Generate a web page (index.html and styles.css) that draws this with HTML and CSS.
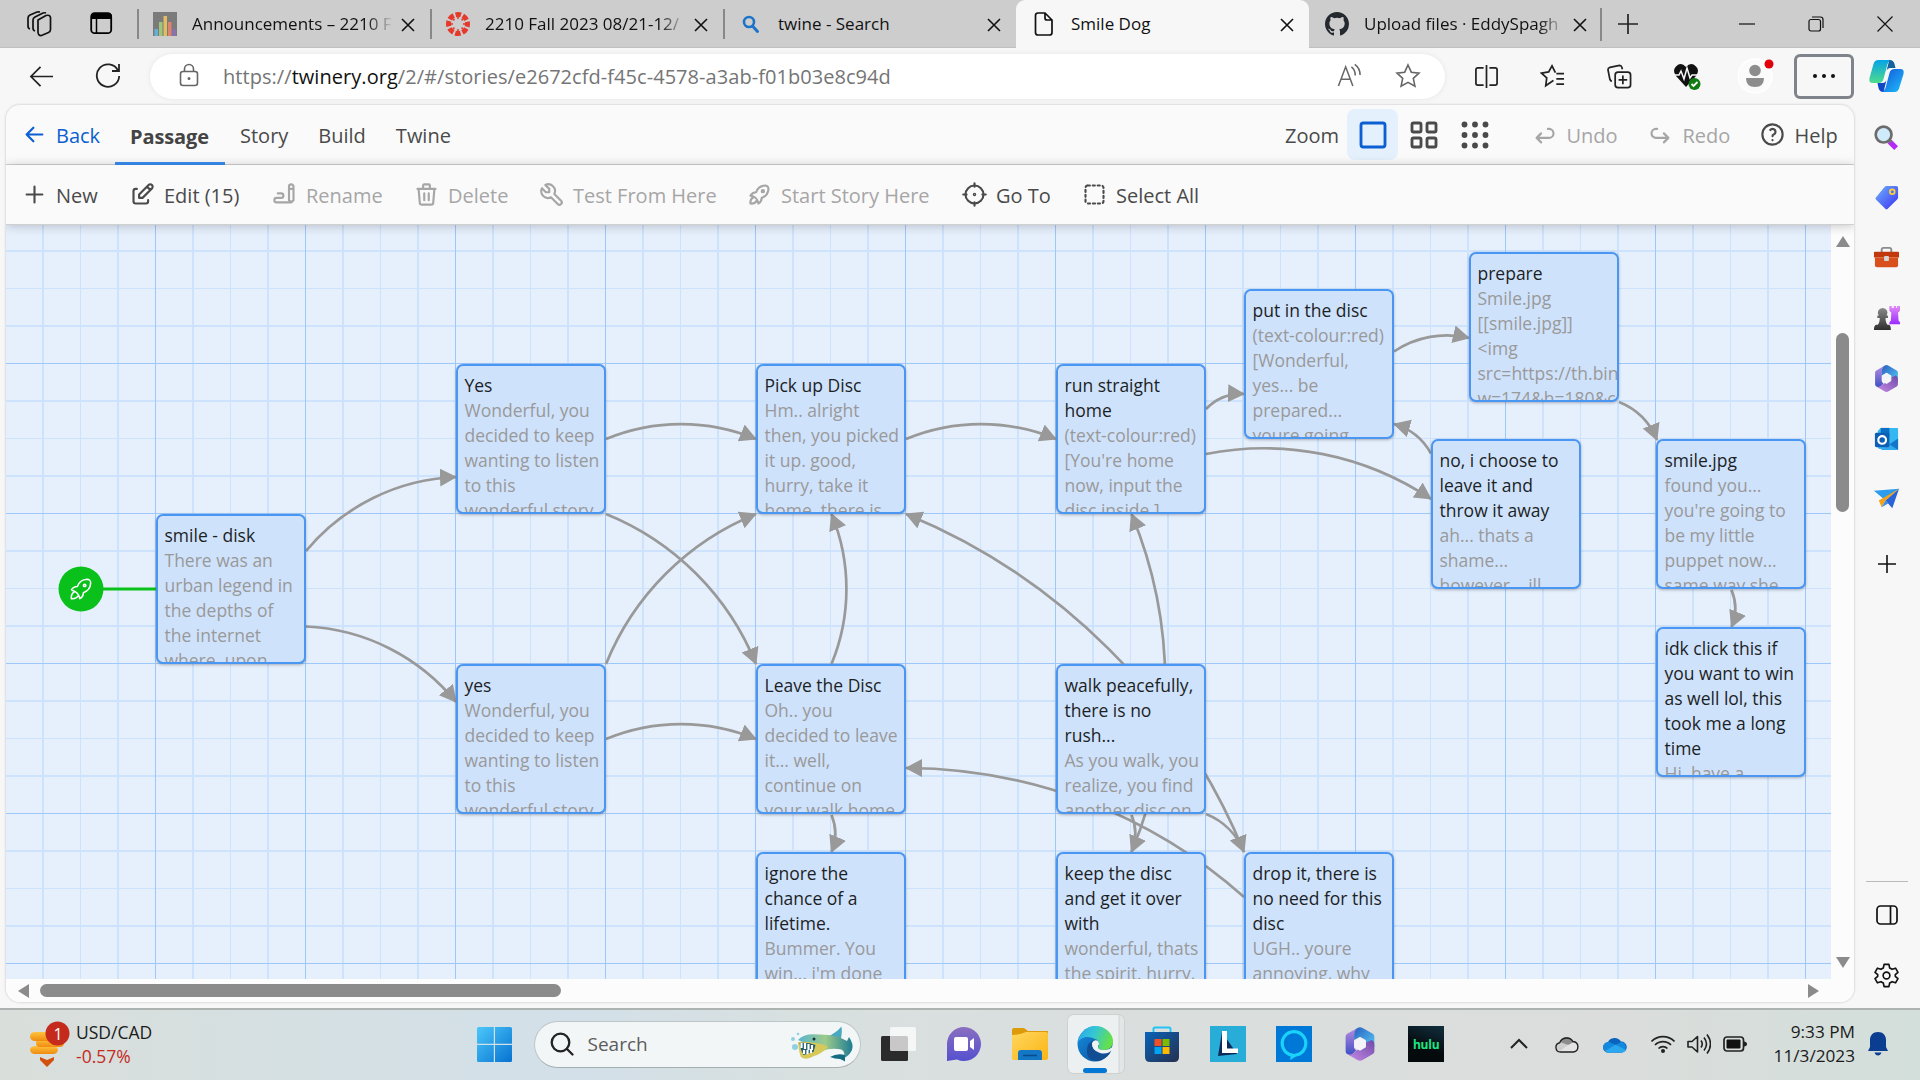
FILE: index.html
```html
<!DOCTYPE html>
<html lang="en">
<head>
<meta charset="utf-8">
<title>Smile Dog</title>
<link rel="stylesheet" href="styles.css">
</head>
<body>
<svg class="defs" width="0" height="0">
  <defs>
    <linearGradient id="gBlue" x1="0" y1="0" x2="1" y2="1"><stop offset="0" stop-color="#4cc8fb"/><stop offset="1" stop-color="#0672d0"/></linearGradient>
    <linearGradient id="gTag" x1="0" y1="0" x2="1" y2="1"><stop offset="0" stop-color="#6fb4ff"/><stop offset="1" stop-color="#3a2ff0"/></linearGradient>
    <linearGradient id="gPurple" x1="0" y1="0" x2="0" y2="1"><stop offset="0" stop-color="#e08af5"/><stop offset="1" stop-color="#9a2bff"/></linearGradient>
    <linearGradient id="gPawn" x1="0" y1="0" x2="0" y2="1"><stop offset="0" stop-color="#8a8a8a"/><stop offset="1" stop-color="#2e2e2e"/></linearGradient>
    <linearGradient id="gChat" x1="0" y1="0" x2="0" y2="1"><stop offset="0" stop-color="#8a6fc0"/><stop offset="1" stop-color="#5550cf"/></linearGradient>
    <linearGradient id="gFolder" x1="0" y1="0" x2="1" y2="1"><stop offset="0" stop-color="#ffd75e"/><stop offset="1" stop-color="#fbb414"/></linearGradient>
    <linearGradient id="gStore" x1="0" y1="0" x2="1" y2="1"><stop offset="0" stop-color="#0a63b8"/><stop offset="1" stop-color="#25304f"/></linearGradient>
    <linearGradient id="gEdgeTop" x1="0" y1="0" x2="1" y2="0.3"><stop offset="0" stop-color="#2aa5ea"/><stop offset=".5" stop-color="#35c6d6"/><stop offset="1" stop-color="#63e04c"/></linearGradient>
    <linearGradient id="gEdgeLow" x1="0" y1="0" x2="1" y2="1"><stop offset="0" stop-color="#1590e0"/><stop offset="1" stop-color="#0b4a96"/></linearGradient>
    <linearGradient id="gCopA" x1="0" y1="0" x2="0" y2="1"><stop offset="0" stop-color="#06a3e6"/><stop offset="1" stop-color="#4fdc8c"/></linearGradient>
    <linearGradient id="gCopB" x1="0" y1="0" x2="1" y2="1"><stop offset="0" stop-color="#1551d8"/><stop offset="1" stop-color="#1cc0fb"/></linearGradient>
    <linearGradient id="gShark" x1="0" y1="0" x2="1" y2="0"><stop offset="0" stop-color="#58b4d0"/><stop offset=".5" stop-color="#9ccb8a"/><stop offset="1" stop-color="#1f7c93"/></linearGradient>
    <linearGradient id="gCoin" x1="0" y1="0" x2="0" y2="1"><stop offset="0" stop-color="#fdc33c"/><stop offset="1" stop-color="#f08a10"/></linearGradient>
    <linearGradient id="gHexA" x1="0" y1="0" x2="0" y2="1"><stop offset="0" stop-color="#b98be0"/><stop offset="1" stop-color="#3a4fc4"/></linearGradient>
    <linearGradient id="gHexB" x1="0" y1="0" x2="1" y2="1"><stop offset="0" stop-color="#2a5fc0"/><stop offset="1" stop-color="#56c8f4"/></linearGradient>
    <linearGradient id="gHexC" x1="0" y1="1" x2="1" y2="0"><stop offset="0" stop-color="#c78be6"/><stop offset="1" stop-color="#6f4aa8"/></linearGradient>
    <symbol id="x" viewBox="0 0 14 14"><path d="M1 1L13 13M13 1L1 13"/></symbol>
    <symbol id="m365" viewBox="0 0 24 26">
      <path d="M10 .7L2.200 5.200Q1 6 1 7.500v11q0 1.500 1.200 2.200L5 22l4-4-1.500-2V7.500Q7.500 3 10 .7z" fill="url(#gHexA)"/>
      <path d="M10 .7q2-1.200 4 0l7.800 4.500Q23 6 23 7.500v8L16.500 12V10L12 7.500 7.500 10V6.500Q7.500 2.500 10 .7z" fill="url(#gHexB)"/>
      <path d="M2.200 20.700Q6 22 9 18l7.500-3V12L21 10q2 .8 2 4v4.500q0 1.500-1.200 2.200L14 25.300q-2 1.200-4 0z" fill="url(#gHexC)"/>
      <path d="M12 7.800l4.500 2.700v5L12 18.200l-4.500-2.700v-5z" fill="#f4f4f8"/>
    </symbol>
    <symbol id="rocket" viewBox="0 0 24 24"><path d="M4 13a8 8 0 0 1 7 7a6 6 0 0 0 3 -5a9 9 0 0 0 6 -8a3 3 0 0 0 -3 -3a9 9 0 0 0 -8 6a6 6 0 0 0 -5 3M7 14a6 6 0 0 0 -3 6a6 6 0 0 0 6 -3"/><circle cx="15" cy="9" r="1"/></symbol>
    <marker id="arrow" markerUnits="userSpaceOnUse" markerWidth="18" markerHeight="20" refX="16" refY="9" orient="auto"><path d="M0 0L17 9L0 18Z" fill="#999"/></marker>
  </defs>
</svg>

<div class="tabbar">
  <div class="tab-actions">
    <svg width="26" height="26" viewBox="0 0 26 26"><g fill="none" stroke="#111" stroke-width="1.700" stroke-linejoin="round"><path d="M12 9l8-4.500q4-1 4.500 2v12q0 2-2 3l-7 3q-3 .5-3.500-3z"/><path d="M9 20q-2-.5-2-3V9q0-2 2-3l8-4q2-.5 3 0"/><path d="M4 18q-2-.5-2-3V7q0-2 2-3l7-3q2-.3 3 0"/></g></svg>
    <svg width="23" height="23" viewBox="0 0 23 23"><rect x="1.200" y="1.200" width="20" height="20" rx="3.500" fill="none" stroke="#000" stroke-width="1.800"/><path d="M1 7V4.500Q1 1 4.500 1h14Q22 1 22 4.500V7z"/><path d="M6.500 7v14" stroke="#000" stroke-width="1.500"/></svg>
  </div>
  <div class="tab">
    <svg class="fav" viewBox="0 0 24 24"><path fill="#7b7b7b" d="M0 0h24v24H0z"/><path fill="#63b0d8" d="M1.500 17H5v7H1.500z"/><path fill="#9cc77a" d="M6 10h3.500v14H6z"/><path fill="#e2bd62" d="M10.500 4H14v20h-3.500z"/><path fill="#df8371" d="M15 10h3.500v14H15z"/><path fill="#8a72b0" d="M19.500 17H23v7h-3.500z"/></svg>
    <span class="tab-title fade">Announcements – 2210 F</span><svg class="close"><use href="#x"/></svg>
  </div>
  <div class="tab">
    <svg class="fav" viewBox="0 0 24 24"><circle cx="12" cy="12" r="9.500" fill="none" stroke="#e4392b" stroke-width="5" stroke-dasharray="5.460 2" stroke-dashoffset="2.700"/><g fill="#e4392b"><circle cx="12" cy="6" r="1"/><circle cx="12" cy="18" r="1"/><circle cx="6" cy="12" r="1"/><circle cx="18" cy="12" r="1"/><circle cx="7.800" cy="7.800" r="1"/><circle cx="16.200" cy="7.800" r="1"/><circle cx="7.800" cy="16.200" r="1"/><circle cx="16.200" cy="16.200" r="1"/></g></svg>
    <span class="tab-title fade">2210 Fall 2023 08/21-12/</span><svg class="close"><use href="#x"/></svg>
  </div>
  <div class="tab">
    <svg class="fav" viewBox="0 0 24 24"><circle cx="10" cy="10" r="5" fill="none" stroke="#1b74c9" stroke-width="2.600"/><path d="M13.500 14L18.500 19.500" stroke="#1b74c9" stroke-width="3" stroke-linecap="round"/></svg>
    <span class="tab-title">twine - Search</span><svg class="close"><use href="#x"/></svg>
  </div>
  <div class="tab active">
    <svg class="fav" viewBox="0 0 24 24"><path d="M3.500 3.500q0-2.500 2.500-2.500h7l7 7v12.500q0 2.500-2.500 2.500H6q-2.500 0-2.500-2.500zM13 1v5q0 2 2 2h5" fill="none" stroke="#111" stroke-width="1.700"/></svg>
    <span class="tab-title">Smile Dog</span><svg class="close"><use href="#x"/></svg>
  </div>
  <div class="tab">
    <svg class="fav" viewBox="0 0 16 16"><path fill="#24292f" d="M8 0C3.580 0 0 3.580 0 8c0 3.540 2.290 6.530 5.470 7.590.4.070.55-.17.55-.38 0-.19-.01-.82-.01-1.490-2.010.37-2.530-.49-2.690-.94-.09-.23-.48-.94-.82-1.130-.28-.15-.68-.52-.01-.53.63-.01 1.080.58 1.230.82.72 1.210 1.870.87 2.330.66.070-.52.28-.87.51-1.070-1.780-.2-3.640-.89-3.640-3.950 0-.87.31-1.590.82-2.150-.08-.2-.36-1.020.08-2.120 0 0 .67-.21 2.200.82a7.600 7.600 0 0 1 4 0c1.530-1.040 2.200-.82 2.200-.82.44 1.100.16 1.920.08 2.120.51.56.82 1.270.82 2.150 0 3.070-1.870 3.750-3.650 3.950.29.25.54.73.54 1.480 0 1.070-.01 1.930-.01 2.200 0 .21.15.46.55.38A8 8 0 0 0 16 8c0-4.420-3.580-8-8-8z"/></svg>
    <span class="tab-title fade">Upload files · EddySpagh</span><svg class="close"><use href="#x"/></svg>
  </div>
  <svg class="newtab" viewBox="0 0 22 22"><path d="M11 1v20M1 11h20"/></svg>
  <div class="window-controls">
    <svg viewBox="0 0 16 16"><path d="M0 8h16"/></svg>
    <svg viewBox="0 0 16 16"><rect x="1" y="3.500" width="11.500" height="11.500" rx="2"/><path d="M4 1h8.500q2.500 0 2.500 2.500V12"/></svg>
    <svg viewBox="0 0 16 16"><path d="M.5.5l15 15M15.500.5l-15 15"/></svg>
  </div>
</div>

<div class="navbar">
  <svg class="nav-back" viewBox="0 0 26 26"><path d="M25 13H2M12 3L2 13l10 10"/></svg>
  <svg class="nav-reload" viewBox="0 0 26 26"><path d="M23 7.500A11.200 11.200 0 1 0 24.200 13M24 1v7h-7"/></svg>
  <div class="address">
    <svg class="lock" viewBox="0 0 20 24"><rect x="1.500" y="8.500" width="17" height="14" rx="2.500"/><path d="M5.500 8.500V6a4.500 4.500 0 0 1 9 0v2.500"/><circle cx="10" cy="15.500" r=".7"/></svg>
    <span class="url">https://<b>twinery.org</b>/2/#/stories/e2672cfd-f45c-4578-a3ab-f01b03e8c94d</span>
    <svg class="read" viewBox="0 0 26 26"><path d="M1.500 24L9 4l7.500 20M4 17h10M15 4q4 3 4 9M18.500 1.500q5.500 4 5.500 11"/></svg>
    <svg class="star" viewBox="0 0 26 26"><path d="M13 2l3.300 7.200 7.700.9-5.700 5.300 1.600 7.800L13 19.300l-6.900 3.900 1.600-7.800L2 10.100l7.700-.9z"/></svg>
  </div>
  <div class="nav-icons">
    <span><svg viewBox="0 0 26 26"><path d="M10 4H4Q2 4 2 6v14q0 2 2 2h6M16 4h6q2 0 2 2v14q0 2-2 2h-6M13 1v24"/></svg></span>
    <span><svg viewBox="0 0 26 26"><path d="M12 18.500l-6 4 1-8L1.500 9.500l7.500-1.300L12.500 2 16 9M17 10h8M17 15.500h8M17 21h8M12 18.500l2-1.500"/></svg></span>
    <span><svg viewBox="0 0 26 26"><rect x="8.500" y="8.500" width="16" height="16" rx="3"/><path d="M16.500 12v9M12 16.500h9M5 18q-1.500-.5-2-2L1 6q0-2 2-2.500l10-2q2 0 2.500 2l.5 2"/></svg></span>
    <span><svg class="heart" viewBox="0 0 28 28"><path fill="#111" stroke="none" d="M13 25L3 14Q-1 8 3 4.500 8-.5 13 5q5-5.500 10-.5 4 3.500 0 9.500z"/><path stroke="#f7f7f7" stroke-width="1.500" d="M0 13h6l2-4 3 8 3-11 3 10 2-3h6"/><circle cx="21.500" cy="22" r="6" fill="#0f7b10" stroke="none"/><path d="M18.500 22l2 2 4-4" stroke="#fff"/></svg></span>
    <span><svg class="avatar" viewBox="0 0 36 40"><circle cx="17" cy="20" r="17" fill="#fbfbfb" stroke="#fff" stroke-width="1.500"/><circle cx="17" cy="14.500" r="5.800" fill="#8d8d8d" stroke="none"/><path d="M8 22h18q0 9-9 9t-9-9z" fill="#8d8d8d" stroke="none"/><circle cx="31" cy="8" r="4.500" fill="#e3000b" stroke="none"/></svg></span>
    <span class="more"><i></i><i></i><i></i></span>
    <span><svg class="copilot" viewBox="0 0 36 34"><path fill="url(#gCopA)" stroke="none" d="M10 1h13q-3 1-4 4l-4 15q-1 4-5 4H4q-4 0-3-5L5 5q1-4 5-4z"/><path fill="#15629c" stroke="none" d="M21 1q4 0 5 4l1 4h-5q-3 0-4 3l2-8q1-3 1-3z"/><path fill="url(#gCopB)" stroke="none" d="M26 33H13q3-1 4-4l4-15q1-4 5-4h6q4 0 3 5l-4 13q-1 5-5 5z"/><path fill="#1246c8" stroke="none" d="M15 33q-4 0-5-4l-1-5h5q3 0 4-3l-2 8q-1 4-1 4z"/></svg></span>
  </div>
</div>

<div class="middle">
<div class="app">
  <div class="menu">
    <a class="btn back"><svg class="ti" viewBox="0 0 24 24"><path d="M5 12h14M5 12l6 6M5 12l6-6"/></svg>Back</a>
    <div class="menu-tabs"><span class="sel">Passage</span><span>Story</span><span>Build</span><span>Twine</span></div>
    <div class="zoom"><span class="zoom-label">Zoom</span>
      <span class="zb on"><svg viewBox="0 0 24 24"><rect x="4" y="4" width="16" height="16" rx="1.500"/></svg></span>
      <span class="zb"><svg viewBox="0 0 24 24"><rect x="4" y="4" width="6" height="6" rx="1"/><rect x="14" y="4" width="6" height="6" rx="1"/><rect x="4" y="14" width="6" height="6" rx="1"/><rect x="14" y="14" width="6" height="6" rx="1"/></svg></span>
      <span class="zb"><svg viewBox="0 0 24 24"><g fill="currentColor"><circle cx="5" cy="5" r="1"/><circle cx="12" cy="5" r="1"/><circle cx="19" cy="5" r="1"/><circle cx="5" cy="12" r="1"/><circle cx="12" cy="12" r="1"/><circle cx="19" cy="12" r="1"/><circle cx="5" cy="19" r="1"/><circle cx="12" cy="19" r="1"/><circle cx="19" cy="19" r="1"/></g></svg></span>
    </div>
    <a class="btn off undo"><svg class="ti" viewBox="0 0 24 24"><path d="M9 11l-4 4l4 4m-4 -4h11a4 4 0 0 0 0 -8h-1"/></svg>Undo</a>
    <a class="btn off redo"><svg class="ti" viewBox="0 0 24 24"><path d="M15 11l4 4l-4 4m4 -4h-11a4 4 0 0 1 0 -8h1"/></svg>Redo</a>
    <a class="btn"><svg class="ti" viewBox="0 0 24 24"><circle cx="12" cy="12" r="9"/><path d="M12 17v.01M12 13.500a1.500 1.500 0 0 1 1-1.500a2.600 2.600 0 1 0-3-4"/></svg>Help</a>
  </div>
  <div class="tools">
    <a class="btn"><svg class="ti" viewBox="0 0 24 24"><path d="M12 5v14M5 12h14"/></svg>New</a>
    <a class="btn"><svg class="ti" viewBox="0 0 24 24"><path d="M7 7h-1a2 2 0 0 0 -2 2v9a2 2 0 0 0 2 2h9a2 2 0 0 0 2 -2v-1M20.385 6.585a2.100 2.100 0 0 0 -2.970 -2.970l-8.415 8.385v3h3l8.385 -8.415zM16 5l3 3"/></svg>Edit (15)</a>
    <a class="btn off"><svg class="ti" viewBox="0 0 24 24"><path d="M20 17v-12c0 -1.121 -.879 -2 -2 -2s-2 .879 -2 2v12l2 2l2 -2zM16 7h4M18 19h-13a2 2 0 1 1 0 -4h4a2 2 0 1 0 0 -4h-3"/></svg>Rename</a>
    <a class="btn off"><svg class="ti" viewBox="0 0 24 24"><path d="M4 7h16M10 11v6M14 11v6M5 7l1 12a2 2 0 0 0 2 2h8a2 2 0 0 0 2 -2l1 -12M9 7v-3a1 1 0 0 1 1 -1h4a1 1 0 0 1 1 1v3"/></svg>Delete</a>
    <a class="btn off"><svg class="ti" viewBox="0 0 24 24"><path d="M7 10h3v-3l-3.500 -3.500a6 6 0 0 1 8 8l6 6a2 2 0 0 1 -3 3l-6 -6a6 6 0 0 1 -8 -8l3.500 3.500"/></svg>Test From Here</a>
    <a class="btn off"><svg class="ti"><use href="#rocket"/></svg>Start Story Here</a>
    <a class="btn"><svg class="ti" viewBox="0 0 24 24"><circle cx="12" cy="12" r="8"/><circle cx="12" cy="12" r=".6"/><path d="M12 2v3M12 19v3M2 12h3M19 12h3"/></svg>Go To</a>
    <a class="btn"><svg class="ti" viewBox="0 0 24 24"><rect x="4" y="4" width="16" height="16" rx="2" stroke-dasharray="1.900 2.500"/></svg>Select All</a>
  </div>
  <div class="stage">
    <div class="canvas">
      <svg class="links" viewBox="6 225 1825 754">
        <g class="ln">
          <path d="M306 551A205 205 0 0 1 456 477"/>
          <path d="M306 626.500A205 205 0 0 1 456 702"/>
          <path d="M606 439A196 196 0 0 1 756 439"/>
          <path d="M606 514A272 272 0 0 1 756 664"/>
          <path d="M606 664A272 272 0 0 1 756 514"/>
          <path d="M606 739A196 196 0 0 1 756 739"/>
          <path d="M831.500 664A196 196 0 0 0 831.500 514"/>
          <path d="M831.500 815A48 48 0 0 1 831.500 852"/>
          <path d="M906 439A196 196 0 0 1 1056 439"/>
          <path d="M1206 409A50 50 0 0 1 1244 394"/>
          <path d="M1206 454A300 300 0 0 1 1431 499"/>
          <path d="M1394 351.500A95 95 0 0 1 1469 338"/>
          <path d="M1619 402A68 68 0 0 1 1657 440"/>
          <path d="M1431 453.500A62 62 0 0 0 1394 424"/>
          <path d="M1731.500 590A48 48 0 0 1 1731.500 627"/>
          <path d="M1244 852A620 620 0 0 0 906 514"/>
          <path d="M1244 897A510 510 0 0 0 906 768"/>
          <path d="M1131.500 852A440 440 0 0 0 1131.500 514"/>
          <path d="M1131.500 815A48 48 0 0 1 1131.500 852"/>
          <path d="M1206 814A68 68 0 0 1 1244 852"/>
        </g>
        <path d="M100 589H157" stroke="#0ac11b" stroke-width="3"/>
        <circle cx="81" cy="589" r="22.500" fill="#0ac11b"/>
        <svg x="66.500" y="574.500" width="29" height="29" fill="none" stroke="#fff" stroke-width="1.300" stroke-linejoin="round"><use href="#rocket" width="29" height="29"/></svg>
      </svg>
      <div class="node smile-disk"><h4>smile - disk</h4><p>There was an<br>urban legend in<br>the depths of<br>the internet<br>where, upon</p></div>
      <div class="node yes-upper"><h4>Yes</h4><p>Wonderful, you<br>decided to keep<br>wanting to listen<br>to this<br>wonderful story</p></div>
      <div class="node yes-lower"><h4>yes</h4><p>Wonderful, you<br>decided to keep<br>wanting to listen<br>to this<br>wonderful story</p></div>
      <div class="node pick-up"><h4>Pick up Disc</h4><p>Hm.. alright<br>then, you picked<br>it up. good,<br>hurry, take it<br>home, there is</p></div>
      <div class="node leave"><h4>Leave the Disc</h4><p>Oh.. you<br>decided to leave<br>it... well,<br>continue on<br>your walk home</p></div>
      <div class="node ignore"><h4>ignore the<br>chance of a<br>lifetime.</h4><p>Bummer. You<br>win... i'm done</p></div>
      <div class="node run"><h4>run straight<br>home</h4><p>(text-colour:red)<br>[You're home<br>now, input the<br>disc inside.]</p></div>
      <div class="node walk"><h4>walk peacefully,<br>there is no<br>rush...</h4><p>As you walk, you<br>realize, you find<br>another disc on</p></div>
      <div class="node keep"><h4>keep the disc<br>and get it over<br>with</h4><p>wonderful, thats<br>the spirit. hurry,</p></div>
      <div class="node put-in"><h4>put in the disc</h4><p>(text-colour:red)<br>[Wonderful,<br>yes... be<br>prepared...<br>youre going</p></div>
      <div class="node drop"><h4>drop it, there is<br>no need for this<br>disc</h4><p>UGH.. youre<br>annoying, why</p></div>
      <div class="node prepare"><h4>prepare</h4><p>Smile.jpg<br>[[smile.jpg]]<br>&lt;img<br>src=https://th.bing<br>w=174&amp;h=180&amp;c</p></div>
      <div class="node throw-away"><h4>no, i choose to<br>leave it and<br>throw it away</h4><p>ah... thats a<br>shame...<br>however... ill</p></div>
      <div class="node smile-jpg"><h4>smile.jpg</h4><p>found you...<br>you're going to<br>be my little<br>puppet now...<br>same way she</p></div>
      <div class="node idk"><h4>idk click this if<br>you want to win<br>as well lol, this<br>took me a long<br>time</h4><p>Hi, have a</p></div>
    </div>
    <div class="vscroll"><i class="tri up"></i><i class="vthumb"></i><i class="tri down"></i></div>
    <div class="hscroll"><i class="tri left"></i><i class="hthumb"></i><i class="tri right"></i></div>
  </div>
</div>

<div class="sidebar">
  <span><svg viewBox="0 0 28 28"><path d="M17 18l7 7" stroke="#b32cf5" stroke-width="5.500"/><path d="M15 15l4 4" stroke="#777" stroke-width="3"/><circle cx="11" cy="11" r="8.200" fill="#cfeafb" stroke="#6c6c6c" stroke-width="2.800"/></svg></span>
  <span><svg viewBox="0 0 28 28"><path d="M14 2h10q2 0 2 2v10q0 1-1 2L15 26q-1 1-2 0L3 16q-1-1 0-2L12 3q1-1 2-1z" fill="url(#gTag)"/><circle cx="20" cy="8" r="2.500" fill="none" stroke="#ffd02e" stroke-width="1.800"/></svg></span>
  <span><svg viewBox="0 0 28 28"><path d="M9 9V6q0-2 2-2h6q2 0 2 2v3" fill="none" stroke="#8c8c8c" stroke-width="2"/><path d="M2 8h24q1 0 1 1v5H1V9q0-1 1-1z" fill="#c1380c"/><path d="M2 14h24v8q0 2-2 2H4q-2 0-2-2z" fill="#d8501c"/><rect x="11.500" y="12.500" width="5" height="5" rx="1" fill="#d6d6d6"/></svg></span>
  <span><svg viewBox="0 0 28 28"><path d="M17 1h2.500v2h2V1h2.500v2h1V1H28v5l-2 2 .5 8 1.500 2v2H17v-2l1.500-2 .5-8-2-2z" fill="url(#gPurple)"/><path d="M10 3a5 5 0 0 1 4 8h1.500v2.500H13q0 5 2 7h2q1.500 1 1.500 5.500H1q0-4.500 2-5.500h2q2-2 2-7H4.500V11H6a5 5 0 0 1 4-8z" fill="url(#gPawn)"/></svg></span>
  <span><svg viewBox="0 0 24 26"><use href="#m365" width="24" height="26"/></svg></span>
  <span><svg viewBox="0 0 28 28"><path d="M8 3h17q1 0 1 1v21H8q-3 0-3-3V6z" fill="#35b8f1"/><path d="M8 3h9v9H8z" fill="#0b6fc4"/><path d="M26 14l-12 8 12 4z" fill="#1377c9"/><path d="M8 26l9-6 9 6z" fill="#32a9ec"/><rect x="2" y="8" width="15" height="15" rx="1.500" fill="#0c5fb5"/><circle cx="9.500" cy="15.500" r="4" fill="none" stroke="#fff" stroke-width="2.200"/></svg></span>
  <span><svg viewBox="0 0 28 28"><path d="M1 6l26-2-14 12z" fill="#2d9cec"/><path d="M27 4L20 24l-7-8z" fill="#2a62d8"/><path d="M27 4L6 16l3 7 4-7z" fill="#f2a31a"/><path d="M9 23l4-7 3 3z" fill="#3b8ce8"/></svg></span>
  <span class="add"><svg viewBox="0 0 20 20"><path d="M10 1v18M1 10h18"/></svg></span>
  <span class="bottom"><svg viewBox="0 0 24 24"><rect x="2" y="3" width="20" height="18" rx="3.500"/><path d="M15.500 3v18"/></svg></span>
  <span class="gear"><svg viewBox="0 0 28 28"><circle cx="14" cy="14" r="3.500"/><path d="M11.500 2.500h5l.8 3.700 2.500 1.400 3.600-1.200 2.500 4.300-2.800 2.500v1.600l2.800 2.500-2.500 4.300-3.600-1.200-2.500 1.400-.8 3.700h-5l-.8-3.700-2.500-1.400-3.600 1.200-2.500-4.300 2.800-2.500v-1.600L2.100 10.700l2.500-4.300 3.600 1.200 2.500-1.400z" stroke-linejoin="round"/></svg></span>
</div>
</div>

<div class="taskbar">
  <div class="widget">
    <svg width="44" height="46" viewBox="0 0 44 46"><g fill="url(#gCoin)"><rect x="4" y="25" width="28" height="8" rx="5"/><rect x="10" y="18" width="28" height="8" rx="4"/><rect x="4" y="11" width="28" height="9" rx="5"/></g><path d="M14 36l7 3 7-3v3l-7 7-7-7z" fill="#d2500f"/><circle cx="31.500" cy="12.500" r="12" fill="#c42b1c"/></svg>
    <b class="badge">1</b>
    <div class="quote"><span>USD/CAD</span><span class="down-rate">-0.57%</span></div>
  </div>
  <svg class="start" viewBox="0 0 35 35"><path fill="url(#gBlue)" d="M1.500 0H16.800V16.800H0V1.500Q0 0 1.500 0zM18 0H33.500Q35 0 35 1.500V16.800H18zM0 18H16.800V35H1.500Q0 35 0 33.500zM18 18H35V33.500Q35 35 33.500 35H18z"/></svg>
  <div class="search">
    <svg class="mag" viewBox="0 0 24 24"><circle cx="10.500" cy="10.500" r="8.800"/><path d="M17 17l5.500 5.500"/></svg><span>Search</span>
    <svg class="shark" viewBox="0 0 64 38"><circle cx="3" cy="14" r="2" fill="#8fd0e2"/><circle cx="8" cy="9" r="1.300" fill="#8fd0e2"/><circle cx="5" cy="22" r="3" fill="#8fd0e2"/><path d="M37 12Q46 8 51.500 1.500q1 6-1 14z" fill="#4aa8be"/><path d="M8 15Q14 8 28 9.500q18-.5 29 6.500l2-4q5 7 3 13-3 6-8 8 2-9-6-9-8-1-16 2z" fill="url(#gShark)"/><path d="M40 32q7-4 15-2v6.500q-2-1.500-5-2.500-5 0-10-2z" fill="#146c82"/><path d="M8 17q6-1 18 1 8 1 12 4-8 8-14 9-8 5-13 1-2-4-3-15z" fill="#d7c85a"/><path d="M9.500 18q8-1 16 2l-2 7-10 3q-3-5-4-12z" fill="#1e5a6c"/><path d="M11.500 18v5M15 18v6M18.500 19v6M22 20v5M14 25v4M17.500 25v4M21 24v4" stroke="#fff" stroke-width="2.200"/><circle cx="24" cy="14" r="1.500" fill="#12343e"/></svg>
  </div>
  <div class="apps">
    <span><svg viewBox="0 0 36 36"><rect x="1" y="10" width="27" height="25" rx="1.500" fill="#2b2b2b"/><rect x="10" y="1" width="26" height="24" rx="1.500" fill="#fff" opacity=".74"/></svg></span>
    <span><svg viewBox="0 0 36 36"><path d="M18 1a17 17 0 1 1-7 32.500L1 35V18A17 17 0 0 1 18 1z" fill="url(#gChat)"/><rect x="8" y="11" width="14" height="14" rx="2" fill="#fff"/><path d="M24 15l4-3v12l-4-3z" fill="#fff"/></svg></span>
    <span><svg viewBox="0 0 36 36"><path d="M0 4q0-2 2-2h10l4 3h20v6H0z" fill="#dd9b0b"/><path d="M0 9q8 0 14-3h20q2 0 2 2v24q0 2-2 2H2q-2 0-2-2z" fill="url(#gFolder)"/><path d="M6 34v-7q0-3 3-3h18q3 0 3 3v7z" fill="#1377c6"/><path d="M11 29.500h14" stroke="#0a4a88" stroke-width="1.500"/></svg></span>
    <span class="open"><svg viewBox="0 0 36 36"><circle cx="18" cy="18" r="17.500" fill="url(#gEdgeLow)"/><path d="M1 16C3 6 10 0 18 0c11 0 18 8 18 15 0 6-4 9-9 9-4 0-6-1-6-3 2-3 1-7-3-8C12 10 5 10 1 16z" fill="url(#gEdgeTop)"/><path d="M21 21q-1 2 1 4 5 4 12 0-5 9-14 10Q9 34 10 24q0-8 8-10 5 3 3 7z" fill="#124d94"/><path d="M36 23q-5 6-13 4-9-3-8-10 2-4 6-2 2 3 0 5-1 4 6 4 6 0 9-4z" fill="#eef2f3"/></svg></span>
    <span><svg viewBox="0 0 36 36"><path d="M9.500 7V3q0-1.500 1.500-1.500h14q1.500 0 1.500 1.500v4" fill="none" stroke="#25c3f5" stroke-width="2"/><path d="M1 6h34v25q0 5-5 5H6q-5 0-5-5z" fill="url(#gStore)"/><path d="M10.500 13h7v7h-7z" fill="#f25022"/><path d="M18.500 13h7v7h-7z" fill="#7fba00"/><path d="M10.500 21h7v7h-7z" fill="#00a4ef"/><path d="M18.500 21h7v7h-7z" fill="#ffb900"/></svg></span>
    <span><svg viewBox="0 0 36 36"><path d="M0 0h36v36H0z" fill="#28add9"/><path d="M12 6L8 30l19-2z" fill="#0b2b5a"/><path d="M12 5h5v17.500h11V27H12z" fill="#fff"/></svg></span>
    <span><svg viewBox="0 0 36 36"><path d="M0 0h36v36H0z" fill="#0078d7"/><path d="M16 31v-2A11.800 11.800 0 1 1 20 29q-2 .5-4 2z" fill="none" stroke="#19d3fb" stroke-width="3.200"/></svg></span>
    <span><svg viewBox="0 0 36 36"><use href="#m365" x="2" y="1" width="32" height="34"/></svg></span>
    <span><b class="hulu">hulu</b></span>
  </div>
  <div class="tray">
    <svg class="t-caret" viewBox="0 0 24 24"><path d="M4 16l8-8 8 8" fill="none" stroke="#222" stroke-width="2"/></svg>
    <svg viewBox="0 0 24 24"><path d="M5.500 20a4.700 4.700 0 0 1-.8-9.300A7.500 7.500 0 0 1 18 9.500a5.300 5.300 0 0 1 .5 10.500z" fill="#e4e4e4"/><path d="M1 14q2-4 5-4l7 3-8 6q-4-1-4-5z" fill="#cfcfcf"/><path d="M5 10Q9 3 15 6l4 4-6 3z" fill="#8d8d8d"/><path d="M5.500 20a4.700 4.700 0 0 1-.8-9.300A7.500 7.500 0 0 1 18 9.500a5.300 5.300 0 0 1 .5 10.500z" fill="none" stroke="#222" stroke-width="1.400"/></svg>
    <svg viewBox="0 0 24 24"><path d="M5.500 20.500a5 5 0 0 1-.8-10A7.500 7.500 0 0 1 18 9.500a5.500 5.500 0 0 1 .5 11z" fill="#0a64bd"/><path d="M5.500 20.500a5.300 5.300 0 0 1 0-10.700l7 3 6-3a5.500 5.500 0 0 1 0 10.700z" fill="#1488dc"/><path d="M2 19l10.500-6.200L23 18q-1.500 2.500-4.500 2.500h-13q-2 0-3.500-1.500z" fill="#2aa7ee"/></svg>
    <svg viewBox="0 0 24 24"><g fill="none" stroke="#222" stroke-width="1.700"><path d="M.5 9.500a16 16 0 0 1 23 0M4 13a11 11 0 0 1 16 0M7.500 16.500a6.500 6.500 0 0 1 9 0"/></g><circle cx="12" cy="19" r="2" fill="#222"/></svg>
    <svg viewBox="0 0 24 24"><g fill="none" stroke="#222" stroke-width="1.600" stroke-linejoin="round"><path d="M1 9.500h4l5.500-5v15.500L5 15H1zM14 8.500q2.500 3.500 0 7M17 5.500q5 6.500 0 13M20 2.500q7 9.500 0 19"/></g></svg>
    <svg viewBox="0 0 24 24"><rect x="1" y="5" width="19.500" height="14" rx="3" fill="none" stroke="#222" stroke-width="1.700"/><rect x="3.500" y="7.500" width="14" height="9" rx="1" fill="#111"/><path d="M21 9.500q3 .5 3 2.500t-3 2.500z" fill="#222"/></svg>
  </div>
  <div class="clock"><span>9:33 PM</span><span>11/3/2023</span></div>
  <svg class="bell" viewBox="0 0 20 24"><path d="M10 0c5 0 8 3.500 8 8v7l2 4H0l2-4V8c0-4.500 3-8 8-8zM6.500 20.500h7q-1 3-3.500 3t-3.500-3z" fill="#0b3d91"/></svg>
</div>
</body>
</html>
```
FILE: styles.css
```css
* { box-sizing: border-box; }
body {
  margin: 0;
  width: 1920px;
  height: 1080px;
  overflow: hidden;
  display: flex;
  flex-direction: column;
  background: #f7f7f7;
  font-family: "Open Sans", "Noto Sans", sans-serif;
  color: #1b1b1b;
}
svg { display: block; flex: none; }
.defs { position: absolute; }

/* browser tab strip */
.tabbar { display: flex; align-items: center; height: 48px; background: #cdcdcd; border-bottom: 1px solid #c0c0c0; }
.tab-actions { display: flex; align-items: center; gap: 38px; width: 137px; padding-left: 26px; }
.tab { display: flex; align-items: center; width: 293px; height: 48px; padding-left: 16px; }
.tab::before { content: ""; width: 2px; height: 30px; background: #888; margin-left: -16px; margin-right: 14px; }
.fav { width: 24px; height: 24px; margin-right: 15px; }
.tab-title { width: 203px; font-size: 17px; line-height: 24px; white-space: nowrap; color: #111; }
.fade { -webkit-mask-image: linear-gradient(90deg, #000 175px, transparent 201px); mask-image: linear-gradient(90deg, #000 175px, transparent 201px); }
.close { width: 14px; height: 14px; margin-left: 6px; margin-top: 2px; stroke: #111; stroke-width: 1.600; }
.active { height: 49px; margin-top: 1px; background: #f7f7f7; border-radius: 9px 9px 0 0; }
.active::before, .active + .tab::before { background: transparent; }
.newtab { width: 22px; height: 22px; margin-left: 15px; stroke: #222; stroke-width: 1.700; }
.tab:nth-child(6) { width: 293px; border-right: 2px solid #888; border-image: linear-gradient(transparent 9px, #888 9px 40px, transparent 40px) 1; }
.window-controls { display: flex; gap: 53px; margin-left: auto; margin-right: 27px; fill: none; stroke: #111; stroke-width: 1.200; }
.window-controls svg { width: 16px; height: 16px; }

/* address row */
.navbar { display: flex; align-items: center; height: 56px; flex: none; fill: none; stroke: #222; stroke-width: 1.800; }
.nav-back { width: 25px; height: 25px; margin-left: 29px; }
.nav-reload { width: 26px; height: 26px; margin-left: 41px; }
.address { display: flex; align-items: center; width: 1296px; height: 45px; margin-left: 29px; padding-left: 29px; border-radius: 23px; background: #fff; box-shadow: 0 0 5px #e4e4e4; stroke: #666; stroke-width: 1.600; }
.lock { width: 20px; height: 24px; margin-right: 24px; margin-top: -2px; }
.url { width: 1114px; font-size: 20px; color: #757575; letter-spacing: 0.050px; white-space: nowrap; }
.url b { font-weight: 400; color: #111; }
.read { width: 25px; height: 25px; margin-right: 33px; margin-top: -2px; }
.star { width: 26px; height: 26px; }
.nav-icons { display: flex; align-items: center; margin-left: 8px; }
.nav-icons span { display: flex; align-items: center; justify-content: center; width: 66.900px; height: 45px; }
.nav-icons svg { width: 25px; height: 25px; }
.nav-icons .heart { width: 28px; height: 28px; }
.nav-icons .avatar { width: 36px; height: 40px; margin-left: 5px; }
.nav-icons .copilot { width: 37px; height: 34px; }
.nav-icons .more { width: 60px; margin: 0 -1px 0 7px; gap: 5px; border: 3px solid #7f848c; border-radius: 6px; }
.more i { width: 4px; height: 4px; border-radius: 50%; background: #111; }

.middle { display: flex; flex: none; height: 904px; }

/* application frame */
.app { width: 1848px; height: 897px; margin: 1px 0 0 6px; background: #fafafa; border-radius: 14px; overflow: hidden; box-shadow: 0 0 2px 1px #dcdcdc; color: #4a4a4a; font-size: 20px; }
.btn { display: flex; align-items: center; gap: 8.500px; white-space: nowrap; }
.ti { width: 27px; height: 27px; fill: none; stroke: currentColor; stroke-width: 1.900; stroke-linecap: round; stroke-linejoin: round; }
.off { color: #a6a6a6; }
.menu { display: flex; align-items: center; height: 60px; padding-top: 2px; padding-left: 14.500px; border-bottom: 1px solid #d2d2d2; }
.back { width: 94.500px; color: #0b5fd0; }
.btn .ti { margin-top: -2px; }
.menu-tabs { display: flex; align-self: stretch; }
.menu-tabs span { display: flex; align-items: center; padding: 0 15px; }
.menu-tabs .sel { width: 110px; font-weight: 700; border-bottom: 3px solid #3a8df2; padding-top: 3px; margin-bottom: -1px; z-index: 1; color: #444; letter-spacing: -0.100px; }
.zoom { display: flex; align-items: center; margin-left: auto; }
.zoom-label { margin-right: 8px; }
.zb { display: flex; align-items: center; justify-content: center; width: 51px; height: 51px; margin-top: -2px; border-radius: 8px; }
.zb svg { width: 36px; height: 36px; fill: none; stroke: currentColor; stroke-width: 1.900; }
.on { background: #e5f0fd; color: #0b5fd0; }
.undo { width: 116px; margin-left: 31px; }
.redo { width: 112px; }
.menu > .btn:last-child { width: 95px; }
.tools { display: grid; grid-template-columns: 108px 142px 142px 125px 208px 215px 120px auto; align-items: center; height: 60px; padding-top: 2px; padding-left: 14.500px; position: relative; z-index: 2; border-bottom: 1px solid #d0d0d0; box-shadow: 0 1px 10px rgba(0, 0, 0, .22); }

/* story map */
.stage { display: grid; grid-template-columns: 1825px 23px; grid-template-rows: 754px 23px; background: #fcfcfc; }
.canvas {
  position: relative;
  overflow: hidden;
  background-color: #e6f0fd;
  background-image:
    linear-gradient(90deg, #9dc8f9 0 1px, transparent 1px 150px),
    linear-gradient(#9dc8f9 0 1px, transparent 1px 150px),
    linear-gradient(90deg, transparent 37.500px, #cde2fd 37.500px 39px, transparent 39px 75px, #cde2fd 75px 76.500px, transparent 76.500px 112.500px, #cde2fd 112.500px 114px, transparent 114px),
    linear-gradient(transparent 37.500px, #cde2fd 37.500px 39px, transparent 39px 75px, #cde2fd 75px 76.500px, transparent 76.500px 112.500px, #cde2fd 112.500px 114px, transparent 114px);
  background-size: 150px 150px;
  background-position: 149px 138px;
}
.links { position: absolute; inset: 0; width: 1825px; height: 754px; }
.ln { fill: none; stroke: #999; stroke-width: 2.700; }
.ln path { marker-end: url(#arrow); }
.node {
  position: absolute;
  width: 149.500px;
  height: 149.500px;
  padding: 8px 0 0 6.500px;
  overflow: hidden;
  border: 2px solid #4a97f3;
  border-radius: 7px;
  background: #cfe2fc;
  box-shadow: 0 1px 3px rgba(0, 0, 0, .28);
  font-size: 17.500px;
  line-height: 25px;
  white-space: nowrap;
}
.node h4 { margin: -1px 0 0; padding-top: 0; font-size: inherit; font-weight: 400; color: #1c1f24; }
.node p { margin: 0; color: #999; }
.smile-disk { left: 150px; top: 289px; }
.yes-upper { left: 450px; top: 139px; }
.yes-lower { left: 450px; top: 439px; }
.pick-up { left: 750px; top: 139px; }
.leave { left: 750px; top: 439px; }
.ignore { left: 750px; top: 627px; }
.run { left: 1050px; top: 139px; }
.walk { left: 1050px; top: 439px; }
.keep { left: 1050px; top: 627px; }
.put-in { left: 1238px; top: 64px; }
.drop { left: 1238px; top: 627px; }
.prepare { left: 1463px; top: 27px; }
.throw-away { left: 1425px; top: 214px; }
.smile-jpg { left: 1650px; top: 214px; }
.idk { left: 1650px; top: 402px; }

.vscroll { display: flex; flex-direction: column; align-items: center; padding: 11px 0 0 0; }
.hscroll { grid-column: 1 / 3; display: flex; align-items: center; padding-left: 12px; }
.tri { width: 0; height: 0; border: 7px solid transparent; }
.up { border-top: 0; border-bottom: 11px solid #8b8b8b; }
.down { border-bottom: 0; border-top: 11px solid #8b8b8b; margin-top: 445px; }
.left { border-left: 0; border-right: 11px solid #8b8b8b; }
.right { border-right: 0; border-left: 11px solid #8b8b8b; margin-left: 1247px; }
.vthumb { width: 13px; height: 179px; margin-top: 86px; border-radius: 7px; background: #8b8b8b; }
.hthumb { width: 521px; height: 13px; margin-left: 11px; border-radius: 7px; background: #8b8b8b; }

/* browser side bar */
.sidebar { display: flex; flex-direction: column; width: 65px; padding-top: 3px; }
.sidebar span { display: flex; flex: none; align-items: center; justify-content: center; height: 60.300px; }
.sidebar svg { width: 27px; height: 27px; }
.sidebar .add { height: 69px; }
.sidebar .add svg { width: 20px; height: 20px; stroke: #111; stroke-width: 1.600; }
.sidebar .bottom { width: 42px; height: 67px; align-self: center; margin-top: 283px; border-top: 1px solid #bbb; }
.sidebar .bottom svg, .gear svg { fill: none; stroke: #111; stroke-width: 1.700; }
.sidebar .bottom svg { width: 24px; height: 24px; }
.sidebar .gear { height: 54px; }

/* taskbar */
.taskbar { display: flex; align-items: center; height: 72px; padding-bottom: 2px; border-top: 2px solid #acb3b1; background: linear-gradient(90deg, #d9deda 0, #d4e0e4 19%, #d3e0e9 30%, #d8e0df 42%, #dadedd 65%, #dadddb 85%, #d3dfdb 100%); }
.widget { position: relative; display: flex; align-items: center; width: 477px; padding-left: 26px; font-size: 17.500px; line-height: 24px; }
.widget svg { margin-right: 6px; }
.badge { position: absolute; left: 46px; top: 1px; width: 24px; text-align: center; color: #fff; font-weight: 400; font-size: 16px; }
.quote { margin-top: -1px; }
.quote span { display: block; }
.down-rate { color: #c42b1c; }
.start { width: 35px; height: 35px; }
.search { display: flex; align-items: center; width: 327px; height: 47px; margin-left: 21.500px; padding-left: 15px; border: 1.500px solid #bcc6c8; border-bottom-color: #a5afb1; border-radius: 24px; background: #f3f6f7; font-size: 19px; color: #5c5c5c; }
.mag { width: 24px; height: 24px; margin-right: 14px; fill: none; stroke: #222; stroke-width: 2.300; stroke-linecap: round; }
.search span { width: 202px; margin-top: -1px; }
.shark { width: 64px; height: 38px; }
.apps { display: flex; margin-left: 4px; }
.apps span { display: flex; align-items: center; justify-content: center; width: 66.100px; height: 58px; }
.apps svg, .hulu { width: 36px; height: 36px; }
.apps .open { position: relative; width: 56px; margin: 0 5px; padding-right: 2px; border-radius: 6px; background: linear-gradient(90deg, #edf0f0 50px, #cfd4d3 51px, #e3e6e6 52px); box-shadow: 0 0 0 1px #cdd2d1; }
.open::after { content: ""; position: absolute; left: 15px; bottom: 0; width: 24px; height: 5px; border-radius: 3px; background: #0577d4; }
.hulu { display: flex; align-items: center; justify-content: center; background: linear-gradient(200deg, #12303f, #050a0d 60%); color: #1ce783; font-size: 12px; letter-spacing: -0.200px; }
.tray { display: flex; align-items: center; margin-left: auto; }
.tray svg { width: 24px; height: 24px; margin-right: 12px; }
.tray svg:nth-child(-n+3) { margin-right: 24px; }
.clock { width: 96px; margin-top: -1px; text-align: right; font-size: 17.200px; line-height: 24px; }
.clock span { display: block; }
.bell { width: 20px; height: 24px; margin: 0 32px 0 13px; }
```
